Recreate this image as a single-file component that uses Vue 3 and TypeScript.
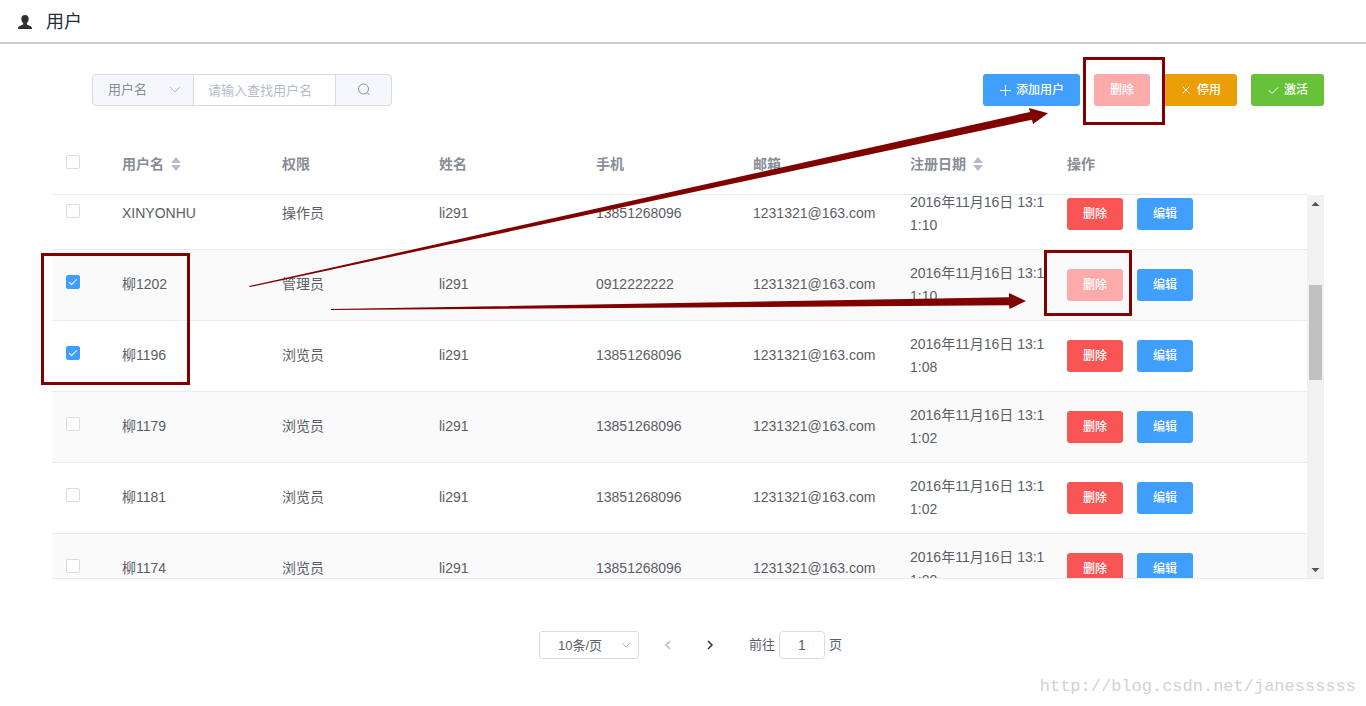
<script setup lang="ts">
import { onMounted, ref } from 'vue'

interface UserRow {
  name: string
  role: string
  fullName: string
  phone: string
  email: string
  date: string
  checked: boolean
  locked?: boolean
}

const email = '1231321@163.com'
const rows = ref<UserRow[]>([
  { name: 'XINYONHU', role: '操作员', fullName: 'li291', phone: '13851268096', email, date: '2016年11月16日 13:11:10', checked: false },
  { name: '柳1202', role: '管理员', fullName: 'li291', phone: '0912222222', email, date: '2016年11月16日 13:11:10', checked: true, locked: true },
  { name: '柳1196', role: '浏览员', fullName: 'li291', phone: '13851268096', email, date: '2016年11月16日 13:11:08', checked: true },
  { name: '柳1179', role: '浏览员', fullName: 'li291', phone: '13851268096', email, date: '2016年11月16日 13:11:02', checked: false },
  { name: '柳1181', role: '浏览员', fullName: 'li291', phone: '13851268096', email, date: '2016年11月16日 13:11:02', checked: false },
  { name: '柳1174', role: '浏览员', fullName: 'li291', phone: '13851268096', email, date: '2016年11月16日 13:11:00', checked: false },
])

const columns = [
  { label: '用户名', sortable: true },
  { label: '权限', sortable: false },
  { label: '姓名', sortable: false },
  { label: '手机', sortable: false },
  { label: '邮箱', sortable: false },
  { label: '注册日期', sortable: true },
  { label: '操作', sortable: false },
]

const keyword = ref('')
const page = ref('1')
const scroller = ref<HTMLElement | null>(null)

onMounted(() => {
  if (scroller.value) scroller.value.scrollTop = 16
})
</script>

<template>
  <div class="page">
    <header class="title-bar">
      <svg class="title-icon" viewBox="0 0 14 14" aria-hidden="true">
        <path d="M7 0C4.600 0 3.300 1.500 3.300 3.700c0 1.900.8 3.500 1.800 4.400v1.200C4.500 10.500.4 10.700 0 13v1h14v-1c-.4-2.300-4.500-2.500-5.100-3.700V8.100c1-.9 1.800-2.500 1.800-4.400C10.700 1.500 9.400 0 7 0z" />
      </svg>
      <h1>用户</h1>
    </header>

    <main class="content">
      <div class="toolbar">
        <form class="search" @submit.prevent>
          <div class="select-box field-select">
            <select aria-label="查找字段"><option>用户名</option></select>
            <svg viewBox="0 0 12 12" aria-hidden="true"><path d="M1 3l5 5 5-5" /></svg>
          </div>
          <input v-model="keyword" type="text" placeholder="请输入查找用户名" aria-label="查找用户名">
          <button type="submit" aria-label="查找">
            <svg viewBox="0 0 14 14" aria-hidden="true"><circle cx="6.500" cy="6" r="5" /><path d="M10 9.500l2.500 2.500" /></svg>
          </button>
        </form>
        <div class="actions">
          <button class="btn primary" type="button">
            <svg viewBox="0 0 12 12" aria-hidden="true"><path d="M6.500 1v11M1 6.500h11" /></svg>添加用户
          </button>
          <button class="btn danger" type="button" disabled>删除</button>
          <button class="btn warning" type="button">
            <svg viewBox="0 0 12 12" aria-hidden="true"><path d="M2.500 2.500l7 7M9.500 2.500l-7 7" /></svg>停用
          </button>
          <button class="btn success" type="button">
            <svg viewBox="0 0 12 12" aria-hidden="true"><path d="M1.500 6l3.500 3.500L11 3.500" /></svg>激活
          </button>
        </div>
      </div>

      <section class="grid">
        <div class="grid-head">
          <table>
            <colgroup><col class="c-check"><col class="c-name"><col v-for="n in 5" :key="n" class="c-data"><col></colgroup>
            <thead>
              <tr>
                <th class="check"><input type="checkbox" aria-label="全选"></th>
                <th v-for="c in columns" :key="c.label">
                  <span class="th">{{ c.label }}
                    <button v-if="c.sortable" class="sort" type="button" :aria-label="c.label + '排序'">
                      <svg viewBox="0 0 10 14" aria-hidden="true"><path d="M0 6l5-6 5 6zM0 8h10l-5 6z" /></svg>
                    </button>
                  </span>
                </th>
              </tr>
            </thead>
          </table>
        </div>
        <div class="grid-body">
          <div ref="scroller" class="scroller">
            <table>
              <colgroup><col class="c-check"><col class="c-name"><col v-for="n in 5" :key="n" class="c-data"><col></colgroup>
              <tbody>
                <tr v-for="r in rows" :key="r.name">
                  <td class="check"><input v-model="r.checked" type="checkbox" :aria-label="r.name"></td>
                  <td class="line">{{ r.name }}</td>
                  <td class="line">{{ r.role }}</td>
                  <td class="line">{{ r.fullName }}</td>
                  <td class="line">{{ r.phone }}</td>
                  <td class="line">{{ r.email }}</td>
                  <td>{{ r.date }}</td>
                  <td>
                    <div class="row-actions">
                      <button class="btn danger" type="button" :disabled="r.locked">删除</button>
                      <button class="btn primary" type="button">编辑</button>
                    </div>
                  </td>
                </tr>
              </tbody>
            </table>
          </div>
          <div class="scrollbar" aria-hidden="true">
            <svg viewBox="0 0 17 17"><path d="M4.500 11l4-4 4 4z" /></svg>
            <div class="track"><div class="thumb" /></div>
            <svg viewBox="0 0 17 17"><path d="M4.500 7l4 4 4-4z" /></svg>
          </div>
        </div>
      </section>

      <nav class="pager" aria-label="分页">
        <div class="select-box size-select">
          <select aria-label="每页条数"><option>10条/页</option></select>
          <svg viewBox="0 0 12 12" aria-hidden="true"><path d="M2 4l4 4 4-4" /></svg>
        </div>
        <button class="turn" type="button" disabled aria-label="上一页">
          <svg viewBox="0 0 12 12" aria-hidden="true"><path d="M8 2L4 6l4 4" /></svg>
        </button>
        <button class="turn" type="button" aria-label="下一页">
          <svg viewBox="0 0 12 12" aria-hidden="true"><path d="M4 2l4 4-4 4" /></svg>
        </button>
        <label class="jump">前往<input v-model="page" type="text">页</label>
      </nav>
    </main>

    <svg class="marks" width="1366" height="706" viewBox="0 0 1366 706" aria-hidden="true">
      <g class="frames">
        <rect x="1084.500" y="58.500" width="79" height="65" />
        <rect x="1045.500" y="251.500" width="85" height="63" />
        <rect x="42.500" y="254.500" width="146" height="129" />
      </g>
      <path d="M249 286L1030 112l-1-4 19 5.300L1033 124l-1-4.300L250 287z" />
      <path d="M331 309L1009 297.300V293l17 8-16.500 8-.5-3.700L331 310z" />
    </svg>
    <p class="watermark">http://blog.csdn.net/janessssss</p>
  </div>
</template>

<style>
body {
  margin: 0;
  background: #fff;
}
</style>

<style scoped>
.page,
.page button,
.page input,
.page select {
  font-family: "Liberation Sans", "Noto Sans CJK SC", sans-serif;
}
.page {
  position: relative;
  min-height: 100vh;
  box-sizing: border-box;
  overflow: hidden;
  color: #5a5e66;
  font-size: 14px;
}
.page *,
.page *::after {
  box-sizing: border-box;
}
button {
  margin: 0;
  padding: 0;
  border: 0;
  background: none;
}
.title-bar {
  display: flex;
  align-items: center;
  gap: 14px;
  height: 44px;
  padding: 2px 0 0 18px;
  border-bottom: 2px solid #ccc;
}
.title-icon {
  width: 14px;
  height: 14px;
  fill: #303133;
}
h1 {
  margin: 0;
  color: #1f2d3d;
  font-size: 18px;
  font-weight: 400;
  line-height: 24px;
}
.content {
  padding: 30px 42px 0 52px;
}
.toolbar {
  display: flex;
  justify-content: space-between;
  padding-left: 40px;
}
.search {
  display: flex;
  width: 300px;
  height: 32px;
  overflow: hidden;
  border: 1px solid #d8dce5;
  border-radius: 4px;
  background: #f5f7fa;
}
.select-box {
  display: flex;
  align-items: center;
  position: relative;
}
.select-box svg {
  position: absolute;
  pointer-events: none;
  width: 12px;
  height: 12px;
  fill: none;
  stroke: #b4bccc;
}
select {
  width: 100%;
  height: 100%;
  margin: 0;
  border: 0;
  background: none;
  appearance: none;
  font-size: 13px;
}
.field-select {
  width: 101px;
  border-right: 1px solid #d8dce5;
}
.field-select select {
  padding: 0 15px 2px;
  color: #878d99;
}
.field-select svg {
  right: 12px;
}
.search input {
  flex: 1;
  min-width: 0;
  padding: 0 14px;
  border: 0;
  background: #fff;
  color: #5a5e66;
  font-size: 13px;
}
.search input::placeholder {
  color: #b4bccc;
}
.search button {
  display: grid;
  place-items: center;
  width: 56px;
  border-left: 1px solid #d8dce5;
}
.search button svg {
  width: 14px;
  height: 14px;
  fill: none;
  stroke: #878d99;
}
.actions,
.row-actions {
  display: flex;
  gap: 14px;
}
.btn {
  display: flex;
  align-items: center;
  gap: 5px;
  height: 32px;
  padding: 0 16px;
  border-radius: 3px;
  color: #fff;
  font-size: 12px;
  font-weight: 500;
  line-height: 16px;
  white-space: nowrap;
}
.btn svg {
  width: 12px;
  height: 12px;
  fill: none;
  stroke: #fff;
}
.primary { background: #409eff; }
.danger { background: #fa5555; }
.danger:disabled { background: #fdaaaa; }
.warning { background: #eb9e05; }
.success { background: #67c23a; }

.grid {
  margin-top: 28px;
  border-bottom: 1px solid #e6ebf5;
}
.grid-head {
  padding-right: 17px;
}
table {
  width: 100%;
  table-layout: fixed;
  border-collapse: separate;
  border-spacing: 0;
}
.c-check { width: 52px; }
.c-name { width: 160px; }
.c-data { width: 12.51%; }
th,
td {
  padding: 12px 0 12px 18px;
  border-bottom: 1px solid #e6ebf5;
  line-height: 23px;
  text-align: left;
  word-break: break-all;
}
th {
  height: 61px;
  color: #878d99;
  font-weight: 700;
}
td {
  height: 71px;
}
.line {
  padding-bottom: 14px;
}
tbody tr:nth-child(even) td {
  background: #fafafa;
}
.check {
  padding: 0 0 6px 14px;
  line-height: 14px;
}
th.check {
  padding-bottom: 4px;
}
.th {
  display: flex;
  align-items: center;
  gap: 7px;
}
.sort svg {
  display: block;
  width: 10px;
  height: 14px;
  fill: #b4bccc;
}
input[type="checkbox"] {
  display: block;
  position: relative;
  width: 14px;
  height: 14px;
  margin: 0;
  border: 1px solid #d8dce5;
  border-radius: 2px;
  background: #fff;
  appearance: none;
}
input[type="checkbox"]:checked {
  border-color: #409eff;
  background: #409eff;
}
input[type="checkbox"]:checked::after {
  content: "";
  position: absolute;
  top: 1px;
  left: 4px;
  width: 4px;
  height: 8px;
  border: solid #fff;
  border-width: 0 1px 1px 0;
  transform: rotate(45deg);
}
.grid-body {
  display: flex;
  height: calc(100vh - 323px);
  min-height: 240px;
}
.scroller {
  flex: 1;
  min-width: 0;
  overflow-y: auto;
  scrollbar-width: none;
}
.scrollbar {
  display: flex;
  flex-direction: column;
  width: 17px;
  background: #f1f1f1;
}
.scrollbar svg {
  width: 17px;
  height: 17px;
  fill: #505050;
}
.track {
  display: grid;
  flex: 1;
  grid-template-rows: 73fr 95fr 181fr;
  padding: 0 2px;
}
.thumb {
  grid-row: 2;
  background: #c1c1c1;
}
.pager {
  display: flex;
  justify-content: center;
  align-items: center;
  margin-top: 52px;
  padding-left: 5px;
  font-size: 13px;
}
.size-select {
  width: 100px;
  height: 28px;
  border: 1px solid #d8dce5;
  border-radius: 3px;
}
.size-select select {
  padding: 0 18px;
  color: #5a5e66;
}
.size-select svg {
  right: 6px;
}
.turn {
  display: grid;
  place-items: center;
  width: 42px;
  height: 28px;
}
.turn:first-of-type {
  margin-left: 8px;
}
.turn svg {
  width: 12px;
  height: 12px;
  fill: none;
  stroke: #2d2f33;
  stroke-width: 1.5;
}
.turn:disabled svg {
  stroke: #b4bccc;
}
.jump {
  display: flex;
  align-items: center;
  gap: 4px;
  margin-left: 18px;
  line-height: 20px;
}
.jump input {
  width: 46px;
  height: 28px;
  padding: 0;
  border: 1px solid #d8dce5;
  border-radius: 4px;
  color: #5a5e66;
  font-size: 14px;
  text-align: center;
}
.marks {
  position: absolute;
  top: 0;
  left: 0;
  pointer-events: none;
  fill: #800000;
}
.frames {
  fill: none;
  stroke: #800000;
  stroke-width: 3;
}
.watermark {
  position: absolute;
  right: 10px;
  bottom: 9px;
  margin: 0;
  color: #d2d2ce;
  font-family: "Liberation Mono", monospace;
  font-size: 17px;
  line-height: 20px;
}
</style>
